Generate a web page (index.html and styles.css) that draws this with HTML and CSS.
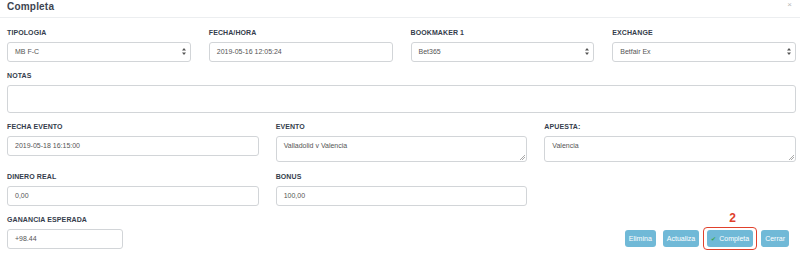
FILE: index.html
```html
<!DOCTYPE html>
<html lang="es">
<head>
    <meta charset="UTF-8">
    <title>Completa</title>
    <link rel="stylesheet" href="styles.css">
</head>
<body>
    <div class="modal">
        <!-- Header -->
        <div class="modal-header">
            <span class="modal-title">Completa</span>
            <span class="close">&times;</span>
        </div>

        <div class="modal-body">
            <!-- Row 1 -->
            <div class="row cols-4">
                <div class="field">
                    <label>TIPOLOGIA</label>
                    <div class="control select">MB F-C<span class="arrows"><svg width="4" height="7" viewBox="0 0 4 7"><path d="M2 0L4 2.6H0Z M2 7L4 4.4H0Z" fill="#555"/></svg></span></div>
                </div>
                <div class="field">
                    <label>FECHA/HORA</label>
                    <div class="control">2019-05-16 12:05:24</div>
                </div>
                <div class="field">
                    <label>BOOKMAKER 1</label>
                    <div class="control select">Bet365<span class="arrows"><svg width="4" height="7" viewBox="0 0 4 7"><path d="M2 0L4 2.6H0Z M2 7L4 4.4H0Z" fill="#555"/></svg></span></div>
                </div>
                <div class="field">
                    <label>EXCHANGE</label>
                    <div class="control select">Betfair Ex<span class="arrows"><svg width="4" height="7" viewBox="0 0 4 7"><path d="M2 0L4 2.6H0Z M2 7L4 4.4H0Z" fill="#555"/></svg></span></div>
                </div>
            </div>

            <!-- Notas -->
            <div class="row">
                <div class="field">
                    <label>NOTAS</label>
                    <div class="control textarea notes"></div>
                </div>
            </div>

            <!-- Row 3 -->
            <div class="row cols-3 row-tall">
                <div class="field">
                    <label>FECHA EVENTO</label>
                    <div class="control">2019-05-18 16:15:00</div>
                </div>
                <div class="field">
                    <label>EVENTO</label>
                    <div class="control textarea small">Valladolid v Valencia<span class="grip"></span></div>
                </div>
                <div class="field">
                    <label>APUESTA:</label>
                    <div class="control textarea small">Valencia<span class="grip"></span></div>
                </div>
            </div>

            <!-- Row 4 -->
            <div class="row cols-3">
                <div class="field">
                    <label>DINERO REAL</label>
                    <div class="control">0,00</div>
                </div>
                <div class="field">
                    <label>BONUS</label>
                    <div class="control">100,00</div>
                </div>
            </div>

            <!-- Footer row -->
            <div class="footer-row">
                <div class="field ganancia">
                    <label>GANANCIA ESPERADA</label>
                    <div class="control">+98.44</div>
                </div>
                <div class="buttons">
                    <button class="btn">Elimina</button>
                    <button class="btn">Actualiza</button>
                    <div class="highlight">
                        <span class="step">2</span>
                        <button class="btn"><span class="check">&#10004;</span>Completa</button>
                    </div>
                    <button class="btn">Cerrar</button>
                </div>
            </div>
        </div>
    </div>
</body>
</html>
```

FILE: styles.css
```css
body {
    margin: 0;
    font-family: "Liberation Sans", Arial, sans-serif;
    background: #fff;
    color: #555;
}

.modal {
    width: 800px;
    height: 257px;
    overflow: hidden;
}

/* Header */
.modal-header {
    height: 17px;
    border-bottom: 1px solid #eceef0;
    display: flex;
    justify-content: space-between;
    align-items: flex-start;
    padding: 0 8px 0 7px;
}

.modal-title {
    font-size: 10px;
    font-weight: bold;
    color: #3c4450;
    line-height: 14px;
    letter-spacing: 0.2px;
}

.close {
    font-size: 8px;
    color: #b8b8b8;
    line-height: 10px;
}

.modal-body {
    padding: 10px 4px 0 7px;
}

.row {
    margin-bottom: 9px;
}

.row-tall {
    margin-bottom: 10px;
}

.cols-4 {
    display: grid;
    grid-template-columns: repeat(4, 1fr);
    column-gap: 18px;
}

.cols-3 {
    display: grid;
    grid-template-columns: repeat(3, 1fr);
    column-gap: 17px;
}

.field label {
    display: block;
    font-size: 7px;
    font-weight: bold;
    color: #353d4c;
    line-height: 10px;
    margin-bottom: 4px;
    letter-spacing: 0.1px;
}

.control {
    position: relative;
    height: 20px;
    box-sizing: border-box;
    border: 1px solid #d2d5d8;
    border-radius: 3px;
    background: #fff;
    font-size: 7px;
    color: #555;
    padding: 0 7px;
    line-height: 18px;
}

.select .arrows {
    position: absolute;
    right: 4px;
    top: 5px;
    line-height: 0;
}

.textarea {
    line-height: 10px;
    padding-top: 4px;
}

.notes {
    height: 28px;
}

.small {
    height: 26px;
}

.grip {
    position: absolute;
    right: 1px;
    bottom: 1px;
    width: 5px;
    height: 5px;
    background: linear-gradient(135deg, transparent 45%, #aaa 45%, #aaa 55%, transparent 55%, transparent 70%, #aaa 70%, #aaa 80%, transparent 80%);
}

/* Footer */
.footer-row {
    display: flex;
    justify-content: space-between;
    align-items: flex-end;
    padding-right: 7px;
}

.ganancia {
    width: 116px;
}

.buttons {
    display: flex;
    align-items: center;
    gap: 7px;
    margin-bottom: 2px;
}

.btn {
    height: 17px;
    border: none;
    border-radius: 3px;
    background: #70b9d7;
    color: #fff;
    font-family: "Liberation Sans", Arial, sans-serif;
    font-size: 7px;
    padding: 0 4px;
    line-height: 17px;
}

.check {
    color: #3aa64a;
    font-size: 6px;
    margin-right: 3px;
}

.highlight {
    position: relative;
    display: flex;
    margin: 0 1px;
}

.highlight::after {
    content: "";
    position: absolute;
    left: -4px;
    right: -4px;
    top: -3px;
    bottom: -3px;
    border: 1.5px solid #e0412c;
    border-radius: 4px;
}

.step {
    position: absolute;
    left: 22px;
    top: -19px;
    color: #e0412c;
    font-size: 12px;
    font-weight: bold;
}
```
